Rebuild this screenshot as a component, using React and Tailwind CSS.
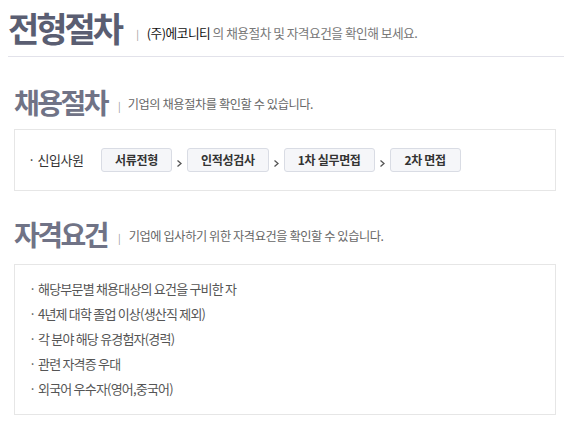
import React from "react";

const font = { fontFamily: '"Noto Sans CJK KR", "Noto Sans", sans-serif' };

function Step({ children }) {
  return (
    <div className="h-[24px] min-w-[71px] flex items-center justify-center rounded-[3px] border border-[#d9dce4] bg-[#f5f6f9] px-[13px] text-[12px] font-bold tracking-[-0.3px] text-[#333]">
      {children}
    </div>
  );
}

function Arrow() {
  return (
    <svg width="15" height="24" viewBox="0 0 15 24" className="shrink-0">
      <path d="M5.5 12.5 L9 15.5 L5.5 18.5" fill="none" stroke="#555" strokeWidth="1.3" />
    </svg>
  );
}

export default function App() {
  const reqs = [
    "해당부문별 채용대상의 요건을 구비한 자",
    "4년제 대학 졸업 이상(생산직 제외)",
    "각 분야 해당 유경험자(경력)",
    "관련 자격증 우대",
    "외국어 우수자(영어,중국어)",
  ];
  return (
    <div className="w-[564px] h-[426px] bg-white overflow-hidden" style={font}>
      {/* Header */}
      <div className="ml-[8px] border-b border-[#e2e2ea] h-[57px] flex items-end pb-[8px]">
        <h1 className="text-[34px] leading-[40px] font-bold tracking-[-3px] text-[#5a5e72]">전형절차</h1>
        <span className="ml-[15px] mb-[7px] text-[10px] text-[#999]">|</span>
        <p className="ml-[8px] mb-[6px] text-[12.7px] tracking-[-0.5px] text-[#777]">
          <span className="text-[#111]">(주)에코니티</span> 의 채용절차 및 자격요건을 확인해 보세요.
        </p>
      </div>

      {/* 채용절차 */}
      <div className="ml-[14px] mt-[29px] flex items-end">
        <h2 className="text-[28px] leading-[32px] font-bold tracking-[-2.5px] text-[#707386]">채용절차</h2>
        <span className="ml-[11px] mb-[5px] text-[10px] text-[#999]">|</span>
        <p className="ml-[7px] mb-[5px] text-[12.2px] tracking-[-0.4px] text-[#666]">기업의 채용절차를 확인할 수 있습니다.</p>
      </div>
      <div className="ml-[14px] mt-[11px] w-[542px] h-[62px] border border-[#e6e6e6] flex items-center pl-[13px]">
        <span className="text-[13px] tracking-[-0.4px] text-[#333] w-[73px]">· 신입사원</span>
        <div className="flex items-center">
          <Step>서류전형</Step>
          <Arrow />
          <Step>인적성검사</Step>
          <Arrow />
          <Step>1차 실무면접</Step>
          <Arrow />
          <Step>2차 면접</Step>
        </div>
      </div>

      {/* 자격요건 */}
      <div className="ml-[14px] mt-[27px] flex items-end">
        <h2 className="text-[28px] leading-[32px] font-bold tracking-[-2.5px] text-[#707386]">자격요건</h2>
        <span className="ml-[11px] mb-[5px] text-[10px] text-[#999]">|</span>
        <p className="ml-[8px] mb-[5px] text-[12.2px] tracking-[-0.4px] text-[#666]">기업에 입사하기 위한 자격요건을 확인할 수 있습니다.</p>
      </div>
      <div className="ml-[14px] mt-[14px] w-[542px] h-[151px] border border-[#e6e6e6] pl-[14px] pt-[11px]">
        {reqs.map((r) => (
          <div key={r} className="h-[25px] flex items-center text-[13px] tracking-[-0.8px] text-[#555]">
            <span className="w-[9px]">·</span>
            <span>{r}</span>
          </div>
        ))}
      </div>
    </div>
  );
}
